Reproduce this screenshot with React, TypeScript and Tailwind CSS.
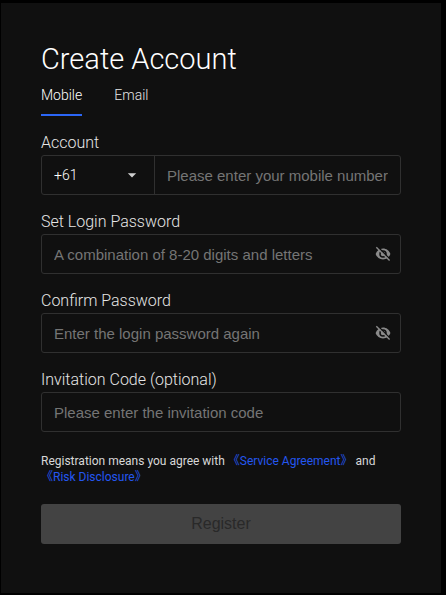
import { useState } from "react";
import { MdArrowDropDown } from "react-icons/md";

const inputClass =
  "h-full w-full min-w-0 bg-transparent px-3 font-['Liberation_Sans',Arial,sans-serif] text-[15px] font-normal text-white outline-none placeholder:text-[#757575]";

interface PasswordFieldProps {
  id: string;
  label: string;
  placeholder: string;
}

function EyeOffIcon() {
  return (
    <svg width="16" height="16" viewBox="0 0 16 16" fill="none" aria-hidden="true">
      <path d="M.6 8C1.8 4.8 4.6 2.6 8 2.6s6.200 2.200 7.400 5.400c-1.200 3.200-4 5.400-7.400 5.400S1.800 11.200.6 8Z" fill="#8a8a8a" />
      <circle cx="8" cy="8" r="3" fill="#8a8a8a" stroke="#101010" strokeWidth="1.500" />
      <path d="M2.600 .8 15.600 13.800" stroke="#101010" strokeWidth="1.500" />
      <path d="M1.300 1.300 14.600 14.600" stroke="#8a8a8a" strokeWidth="1.400" />
    </svg>
  );
}

function PasswordField({ id, label, placeholder }: PasswordFieldProps) {
  const [visible, setVisible] = useState(false);

  return (
    <div>
      <label htmlFor={id} className="block text-base leading-6 text-[#e6e6e6]">
        {label}
      </label>
      <div className="flex h-10 items-center rounded-[3px] border border-[#303030]">
        <input
          id={id}
          type={visible ? "text" : "password"}
          placeholder={placeholder}
          className={inputClass}
        />
        <button
          type="button"
          aria-label="Toggle password visibility"
          onClick={() => setVisible(!visible)}
          className="mr-[9px] shrink-0"
        >
          <EyeOffIcon />
        </button>
      </div>
    </div>
  );
}

export default function App() {
  const [tab, setTab] = useState("Mobile");

  return (
    <div className="min-h-screen bg-black pt-[3px] pr-[5px] pb-[2px] pl-px font-[Roboto,sans-serif] font-light">
      <main className="min-h-[590px] bg-[#101010] px-10 pt-[38px] pb-12">
        <h1 className="text-[29px] leading-9 text-white">Create Account</h1>

        {/* Tabs */}
        <div className="mt-1 flex gap-8">
          {["Mobile", "Email"].map((name) => (
            <button
              key={name}
              type="button"
              onClick={() => setTab(name)}
              className={`border-b-2 pt-1 pb-2 text-sm leading-[21px] ${
                tab === name ? "border-[#2b66f6] text-white" : "border-transparent text-[#e6e6e6]"
              }`}
            >
              {name}
            </button>
          ))}
        </div>

        <form className="mt-[15px] flex flex-col gap-[15px]">
          {/* Account */}
          <div>
            <label htmlFor="mobile" className="block text-base leading-6 text-[#e6e6e6]">
              Account
            </label>
            <div className="flex h-10 items-center rounded-[3px] border border-[#303030]">
              <div className="relative h-full w-[113px] shrink-0 border-r border-[#303030]">
                <select
                  aria-label="Country code"
                  className="h-full w-full appearance-none bg-transparent px-3 text-sm text-white outline-none"
                >
                  <option>+61</option>
                </select>
                <MdArrowDropDown
                  size={20}
                  className="pointer-events-none absolute inset-y-0 right-3 my-auto text-[#d0d0d0]"
                />
              </div>
              <input
                id="mobile"
                type="tel"
                placeholder="Please enter your mobile number"
                className={inputClass}
              />
            </div>
          </div>

          <PasswordField
            id="password"
            label="Set Login Password"
            placeholder="A combination of 8-20 digits and letters"
          />
          <PasswordField
            id="confirm"
            label="Confirm Password"
            placeholder="Enter the login password again"
          />

          {/* Invitation code */}
          <div>
            <label htmlFor="invite" className="block text-base leading-6 text-[#e6e6e6]">
              Invitation Code (optional)
            </label>
            <div className="flex h-10 items-center rounded-[3px] border border-[#303030]">
              <input
                id="invite"
                type="text"
                placeholder="Please enter the invitation code"
                className={inputClass}
              />
            </div>
          </div>

          <div className="mt-1.5">
            <p className="text-xs leading-4 font-normal text-[#d8d8d8]">
              Registration means you agree with{" "}
              <a href="#service" className="font-[Roboto,'Noto_Sans_CJK_SC',sans-serif] text-[#2457f0]">
                《Service Agreement》
              </a>{" "}
              and{" "}
              <a href="#risk" className="inline-block font-[Roboto,'Noto_Sans_CJK_SC',sans-serif] text-[#2457f0]">
                《Risk Disclosure》
              </a>
            </p>
            <button
              type="submit"
              disabled
              className="mt-[19px] h-10 w-full rounded-[3px] bg-[#434343] font-['Liberation_Sans',Arial,sans-serif] text-base font-normal text-[#292929]"
            >
              Register
            </button>
          </div>
        </form>
      </main>
    </div>
  );
}
